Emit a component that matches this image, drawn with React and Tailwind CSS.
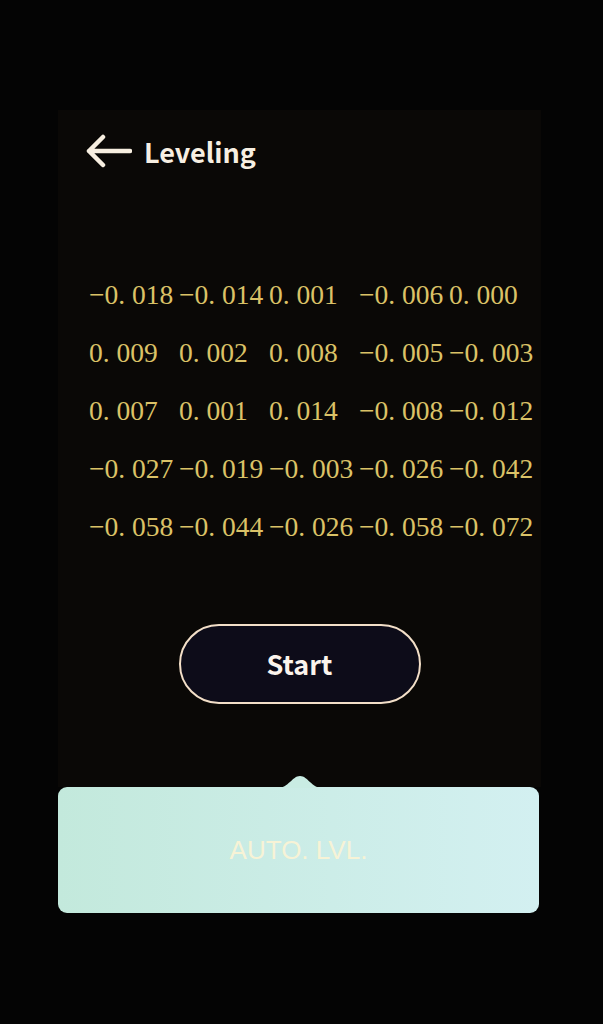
import React from "react";

const rows = [
  ["-0.018", "-0.014", "0.001", "-0.006", "0.000"],
  ["0.009", "0.002", "0.008", "-0.005", "-0.003"],
  ["0.007", "0.001", "0.014", "-0.008", "-0.012"],
  ["-0.027", "-0.019", "-0.003", "-0.026", "-0.042"],
  ["-0.058", "-0.044", "-0.026", "-0.058", "-0.072"],
];

function Num({ v }) {
  const neg = v.startsWith("-");
  const body = neg ? v.slice(1) : v;
  const [a, b] = body.split(".");
  return (
    <span className="whitespace-nowrap">
      {neg ? "\u2212" : ""}
      {a}
      <span className="inline-block w-[0.5em]">.</span>
      {b}
    </span>
  );
}

export default function App() {
  return (
    <div className="min-h-[1024px] w-full bg-[#040404] pt-[110px] pl-[58px]">
      <div className="flex h-[677px] w-[483px] flex-col bg-[#0a0806]">
        <div className="flex h-[82px] items-center pl-[28px]">
          <svg width="46" height="34" viewBox="0 0 46 34" className="shrink-0">
            <path
              d="M3 17 H44 M3 17 L17 3 M3 17 L17 31"
              fill="none"
              stroke="#f7eee0"
              strokeWidth="4.5"
              strokeLinecap="round"
              strokeLinejoin="round"
            />
          </svg>
          <span
            className="ml-[12px] text-[27px] font-semibold leading-none text-[#f7efe2]"
            style={{ fontFamily: '"Noto Sans CJK SC", "Noto Sans", sans-serif' }}
          >
            Leveling
          </span>
        </div>

        <div
          className="mt-[74px] flex flex-col pl-[31px] text-[27.5px] text-[#dbc267]"
          style={{ fontFamily: '"Liberation Serif", serif' }}
        >
          {rows.map((r, i) => (
            <div key={i} className="grid h-[58px] grid-cols-[90px_90px_90px_90px_90px] items-center">
              {r.map((v, j) => (
                <Num key={j} v={v} />
              ))}
            </div>
          ))}
        </div>

        <div className="mt-[68px] flex justify-center">
          <div
            className="flex h-[80px] w-[242px] items-center justify-center rounded-full border-[2.5px] border-[#f3dfc8] bg-[#0d0c19] text-[27px] font-bold text-[#fbf4ec]"
            style={{ fontFamily: '"Noto Sans CJK SC", "Noto Sans", sans-serif' }}
          >
            Start
          </div>
        </div>
      </div>

      <div className="relative flex h-[126px] w-[481px] items-center justify-center rounded-[9px] bg-gradient-to-r from-[#c3e9dc] to-[#d3f0f1]">
        <svg
          width="46"
          height="12"
          viewBox="0 0 46 12"
          className="absolute left-[219px] top-[-11px]"
        >
          <path d="M0 12 C12 12 15 0 23 0 C31 0 34 12 46 12 Z" fill="#c9ece3" />
        </svg>
        <span
          className="text-[26px] text-[#f7f3d6]"
          style={{ fontFamily: '"Liberation Sans", Arial, sans-serif' }}
        >
          AUTO. LVL.
        </span>
      </div>
    </div>
  );
}
